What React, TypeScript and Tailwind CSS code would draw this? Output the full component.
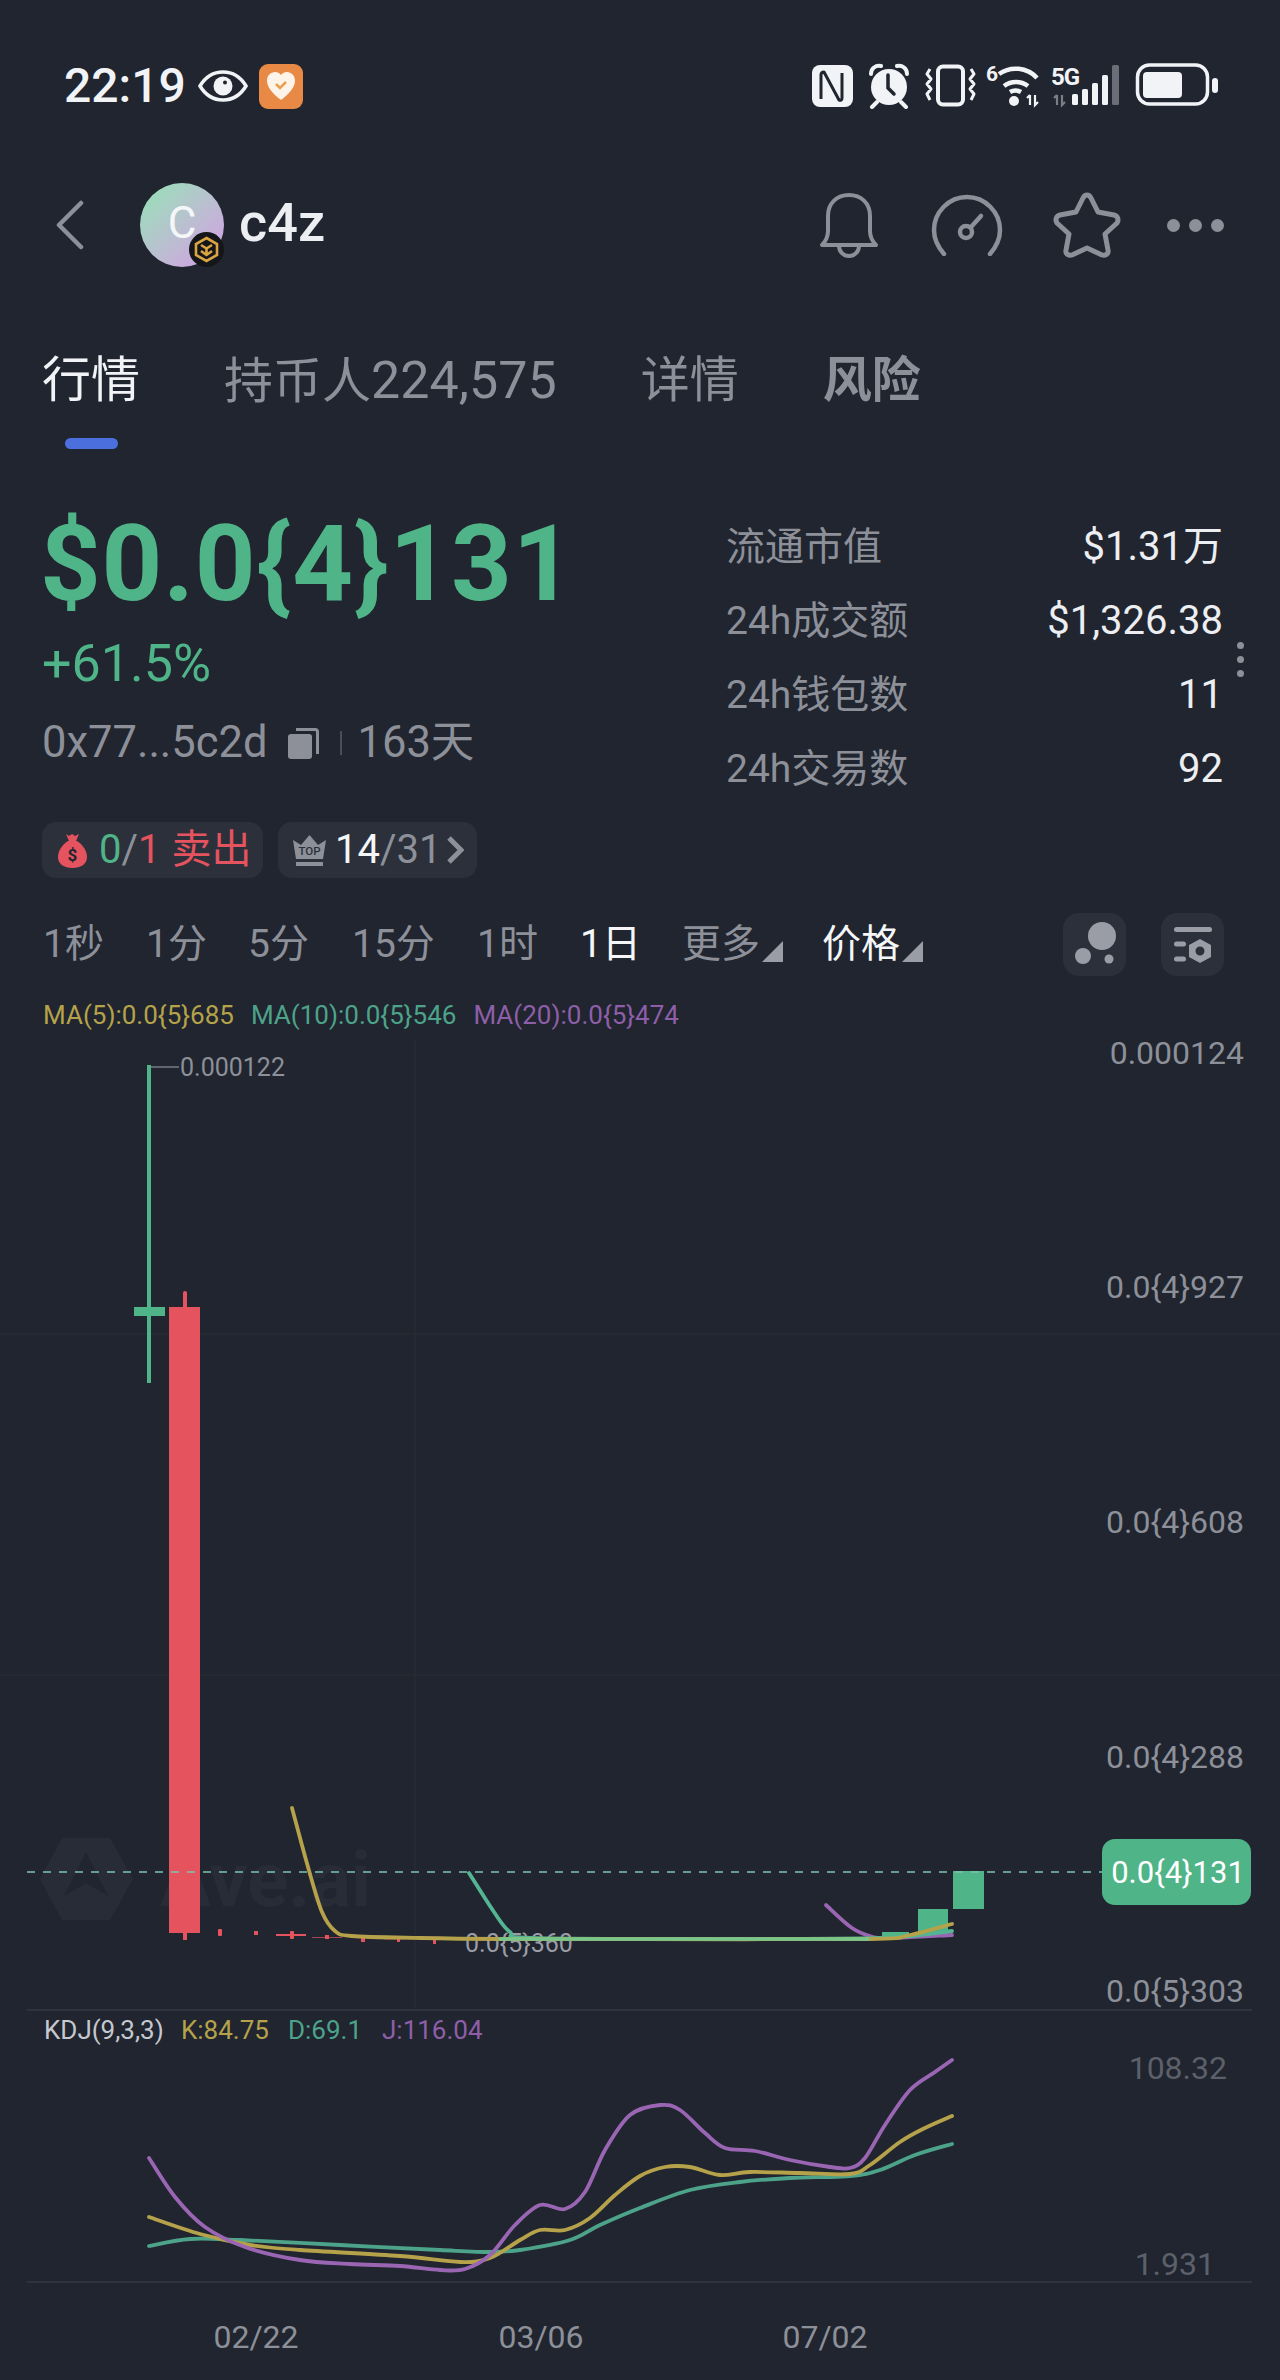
import { useMemo } from 'react';

const GREEN = '#4fb488';
const RED = '#e5535f';
const GRAY = '#8d9099';
const YELLOW = '#b5a24a';
const TEAL = '#4da38a';
const PURPLE = '#9a66b4';

type Pt = [number, number];

// Catmull-Rom -> bezier, para suavizar las curvas del gráfico
function smooth(pts: Pt[]) {
  let d = `M${pts[0][0]} ${pts[0][1]}`;
  for (let i = 0; i < pts.length - 1; i++) {
    const p0 = pts[i - 1] ?? pts[i];
    const p1 = pts[i];
    const p2 = pts[i + 1];
    const p3 = pts[i + 2] ?? p2;
    const c1x = p1[0] + (p2[0] - p0[0]) / 6;
    const c1y = p1[1] + (p2[1] - p0[1]) / 6;
    const c2x = p2[0] - (p3[0] - p1[0]) / 6;
    const c2y = p2[1] - (p3[1] - p1[1]) / 6;
    d += ` C${c1x.toFixed(1)} ${c1y.toFixed(1)} ${c2x.toFixed(1)} ${c2y.toFixed(1)} ${p2[0]} ${p2[1]}`;
  }
  return d;
}

const kdjJ: Pt[] = [[149, 2158], [175, 2197], [205, 2227], [245, 2247], [300, 2260], [350, 2264], [400, 2266], [440, 2270], [465, 2269], [490, 2255], [515, 2225], [540, 2205], [565, 2209], [585, 2192], [605, 2150], [630, 2115], [660, 2105], [680, 2110], [705, 2133], [725, 2148], [755, 2151], [790, 2160], [830, 2167], [850, 2168], [865, 2158], [885, 2125], [910, 2090], [935, 2072], [952, 2060]];
const kdjK: Pt[] = [[149, 2217], [200, 2234], [250, 2245], [300, 2250], [400, 2256], [460, 2262], [490, 2258], [520, 2240], [540, 2230], [565, 2230], [590, 2218], [615, 2195], [640, 2176], [665, 2167], [690, 2167], [720, 2175], [750, 2172], [800, 2173], [850, 2174], [870, 2165], [900, 2142], [925, 2128], [952, 2116]];
const kdjD: Pt[] = [[149, 2246], [190, 2239], [240, 2240], [340, 2245], [440, 2250], [490, 2252], [520, 2250], [570, 2240], [600, 2225], [640, 2208], [690, 2190], [740, 2182], [790, 2178], [850, 2176], [880, 2170], [915, 2155], [952, 2144]];
const ma5: Pt[] = [[292, 1808], [308, 1867], [322, 1912], [335, 1931], [352, 1936], [420, 1938], [500, 1939], [640, 1939], [868, 1939], [910, 1935], [952, 1924]];
const ma10: Pt[] = [[469, 1873], [494, 1912], [510, 1932], [530, 1938], [700, 1939], [880, 1938], [952, 1931]];
const ma20: Pt[] = [[826, 1905], [852, 1928], [873, 1937], [890, 1938], [952, 1935]];

function StatusIcons() {
  return (
    <svg width="408" height="46" viewBox="813 64 408 46" fill="none">
      {/* NFC */}
      <rect x="813" y="66" width="41" height="42" rx="8" fill="#f1f3f6" />
      <path d="M822 100V76q0-3 3-3l15 28q3 1 3-2V74" stroke="#20252f" strokeWidth="3" strokeLinejoin="round" />
      {/* Alarma */}
      <circle cx="890" cy="88" r="18" fill="#f1f3f6" />
      <path d="M872 75a8 8 0 0 1 10-8M908 75a8 8 0 0 0-10-8M878 103l-5 5M902 103l5 5" stroke="#f1f3f6" strokeWidth="4" strokeLinecap="round" />
      <path d="M889 76v13l6 6" stroke="#20252f" strokeWidth="3.500" strokeLinecap="round" />
      {/* Vibración */}
      <rect x="939" y="67.500" width="25" height="38" rx="5" stroke="#f1f3f6" strokeWidth="4" />
      <path d="M931 70l-3 5 4 5-4 5 4 5-4 5 3 6M972 70l3 5-4 5 4 5-4 5 4 5-3 6" stroke="#f1f3f6" strokeWidth="3" strokeLinejoin="round" />
      {/* Wifi 6 */}
      <text x="987" y="82" fill="#f1f3f6" fontSize="21" fontWeight="700">6</text>
      <path d="M1000 75a29 29 0 0 1 38 4M1005 87a20 20 0 0 1 24 0M1011 93a11 11 0 0 1 11 0" stroke="#f1f3f6" strokeWidth="4.500" />
      <circle cx="1015" cy="102" r="5" fill="#f1f3f6" />
      <path d="M1031 96v10M1028 99l3-3M1036 96v10l3-3" stroke="#f1f3f6" strokeWidth="2.200" />
      {/* 5G y cobertura */}
      <text x="1052" y="86" fill="#f1f3f6" fontSize="24" fontWeight="700" letterSpacing="-1">5G</text>
      <path d="M1058 96v10M1055 99l3-3M1063 96v10l3-3" stroke="#7b7e86" strokeWidth="2.200" />
      <rect x="1073" y="95" width="6" height="11" rx="1.500" fill="#f1f3f6" />
      <rect x="1083" y="90" width="6" height="16" rx="1.500" fill="#f1f3f6" />
      <rect x="1093" y="84" width="6" height="22" rx="1.500" fill="#f1f3f6" />
      <rect x="1103" y="76" width="6" height="30" rx="1.500" fill="#f1f3f6" />
      <rect x="1113" y="66" width="7" height="40" rx="1.500" fill="#6b6e76" />
      {/* Batería */}
      <rect x="1138.500" y="66" width="70" height="39" rx="12" stroke="#f1f3f6" strokeWidth="3.500" />
      <rect x="1144" y="73" width="39" height="26" rx="4" fill="#f1f3f6" />
      <rect x="1213" y="79" width="6" height="15" rx="3" fill="#f1f3f6" />
    </svg>
  );
}

function StatusBar() {
  return (
    <div className="h-[172px] flex items-center justify-between pl-[64px] pr-[60px] shrink-0">
      <div className="flex items-center">
        <span className="text-[48px] font-medium leading-none text-[#f1f3f6]">22:19</span>
        <svg width="50" height="32" viewBox="0 0 50 32" fill="none" className="ml-[12px]">
          <path d="M2 16C8 6 16 2 25 2s17 4 23 14c-6 10-14 14-23 14S8 26 2 16Z" stroke="#f1f3f6" strokeWidth="3.500" />
          <circle cx="25" cy="16" r="9.500" fill="#f1f3f6" />
          <circle cx="27" cy="12.500" r="2" fill="#20252f" />
        </svg>
        <div className="ml-[11px] w-[44px] h-[45px] rounded-[9px] bg-[#e88a45] flex items-center justify-center">
          <svg width="30" height="30" viewBox="0 0 30 30">
            <path d="M15 29C6 22 1 16 1 9.500 1 4.500 5 1 9 1c2.500 0 4.500 1 6 3 1.500-2 3.500-3 6-3 4 0 8 3.500 8 8.500C29 16 24 22 15 29Z" fill="#fdf3e8" />
            <path d="M10 13l4 4 6-6" stroke="#e8a04f" strokeWidth="2.500" fill="none" />
          </svg>
        </div>
      </div>
      <StatusIcons />
    </div>
  );
}

function Header() {
  return (
    <div className="h-[106px] flex items-center pl-[56px] pr-[56px] shrink-0">
      <svg width="28" height="50" viewBox="0 0 28 50" fill="none">
        <path d="M25 3 3 25l22 22" stroke={GRAY} strokeWidth="4.500" strokeLinecap="round" strokeLinejoin="round" />
      </svg>
      <div className="relative ml-[56px] w-[84px] h-[84px] rounded-full bg-linear-to-br from-[#8fe3b4] to-[#d49ae6] flex items-center justify-center">
        <span className="text-[#f4f6f8] text-[44px] leading-none pb-[4px]">C</span>
        <div className="absolute right-0 bottom-0 w-[35px] h-[35px] rounded-full bg-[#15161a] flex items-center justify-center">
          <svg width="27" height="27" viewBox="0 0 27 27" fill="none" stroke="#d9a441" strokeWidth="2.600">
            <path d="M13.500 2 24 8v11l-10.500 6L3 19V8Z" />
            <path d="M8 9l5.500 3.500L19 9M13.500 12.500V18M8 15l5.500 4 5.500-4" />
          </svg>
        </div>
      </div>
      <span className="ml-[15px] text-[54px] font-medium leading-none text-[#eceef2] pb-[4px]">c4z</span>

      <div className="ml-auto flex items-center">
        <svg width="64" height="66" viewBox="0 0 64 66" fill="none" stroke={GRAY} strokeWidth="4" strokeLinejoin="round">
          <path d="M5 53c4-4 6-8 6-14V24C11 11 20 3 32 3s21 8 21 21v15c0 6 2 10 6 14Z" />
          <path d="M22 54a10 10 0 0 0 20 0" />
        </svg>
        <svg width="72" height="62" viewBox="0 0 72 62" fill="none" stroke={GRAY} strokeWidth="4.500" strokeLinecap="round" className="ml-[50px]">
          <path d="M13 60C6 52 3 44 3 36 3 18 18 3 36 3s33 15 33 33c0 8-3 16-10 24" />
          <circle cx="35" cy="38" r="6" />
          <path d="M40 33l10-11" />
        </svg>
        <svg width="68" height="66" viewBox="0 0 68 66" fill="none" stroke={GRAY} strokeWidth="5" strokeLinejoin="round" className="ml-[50px]">
          <path d="M34 3c2 0 3 1 4 3l7 14 16 3c4 1 5 5 3 8L52 42l3 16c1 4-3 6-6 5l-15-7-15 7c-3 1-7-1-6-5l3-16L4 31c-2-3-1-7 3-8l16-3 7-14c1-2 2-3 4-3Z" />
        </svg>
        <div className="ml-[46px] flex gap-[9px]">
          <span className="w-[13px] h-[13px] rounded-full bg-[#8d9099]" />
          <span className="w-[13px] h-[13px] rounded-full bg-[#8d9099]" />
          <span className="w-[13px] h-[13px] rounded-full bg-[#8d9099]" />
        </div>
      </div>
    </div>
  );
}

function Tabs() {
  return (
    <div className="h-[179px] pl-[42px] pt-[73px] flex gap-[84px] shrink-0 text-[49px] leading-[60px] text-[#8d9099]">
      <div className="flex flex-col items-center">
        <span className="text-[#f1f3f6]">行情</span>
        <span className="mt-[27px] w-[53px] h-[11px] rounded-full bg-[#4b70de]" />
      </div>
      <span>持币人<span className="text-[52px]">224,575</span></span>
      <span>详情</span>
      <span className="font-bold">风险</span>
    </div>
  );
}

const stats = [
  ['流通市值', '$1.31万'],
  ['24h成交额', '$1,326.38'],
  ['24h钱包数', '11'],
  ['24h交易数', '92'],
];

function Summary() {
  return (
    <div className="relative h-[365px] pl-[42px] pr-[57px] flex justify-between shrink-0">
      <div className="flex flex-col">
        <span className="mt-[55px] -ml-[2px] text-[106px] font-bold leading-[104px] tracking-[0.8px] text-[#4fb488]">$0.0{'{4}'}131</span>
        <span className="mt-[18px] text-[52px] leading-[60px] text-[#4fb488]">+61.5%</span>
        <div className="mt-[21px] flex items-center text-[43.500px] leading-[56px] text-[#8d9099]">
          <span>0x77...5c2d</span>
          <svg width="32" height="32" viewBox="0 0 32 32" className="ml-[20px]" fill="#8d9099">
            <rect x="0" y="7" width="24" height="25" rx="3" />
            <path d="M8 1h19a4 4 0 0 1 4 4v22h-3V5a1 1 0 0 0-1-1H8Z" />
          </svg>
          <span className="ml-[20px] w-[2px] h-[24px] bg-[#4a4e58]" />
          <span className="ml-[16px]">163天</span>
        </div>
      </div>
      <div className="w-[497px] pt-[53px] flex flex-col text-[39px] leading-[74px]">
        {stats.map(([label, value]) => (
          <div key={label} className="flex justify-between">
            <span className="text-[#8d9099]">{label}</span>
            <span className="text-[#eceef2] text-[40px]">{value}</span>
          </div>
        ))}
      </div>
      <div className="absolute right-[36px] top-[185px] flex flex-col gap-[7px]">
        <span className="w-[7px] h-[7px] rounded-full bg-[#8d9099]" />
        <span className="w-[7px] h-[7px] rounded-full bg-[#8d9099]" />
        <span className="w-[7px] h-[7px] rounded-full bg-[#8d9099]" />
      </div>
    </div>
  );
}

function Pills() {
  return (
    <div className="pl-[42px] flex gap-[15px] shrink-0 text-[40px] leading-none">
      <div className="w-[221px] h-[56px] rounded-[14px] bg-[#2b303b] flex items-center pl-[16px]">
        <svg width="29" height="35" viewBox="0 0 29 35">
          <path d="M8 1l3 2 3-2 3 2 4-2-3 7h-7Z" fill={RED} />
          <path d="M10 8h9c6 4 10 10 10 16 0 7-6 11-14.500 11S0 31 0 24C0 18 4 12 10 8Z" fill={RED} />
          <text x="14.500" y="28" textAnchor="middle" fontSize="17" fontWeight="700" fill="#20252f">$</text>
        </svg>
        <span className="ml-[12px] text-[#4fb488]">0</span>
        <span className="text-[#8d9099]">/</span>
        <span className="text-[#e5535f]">1</span>
        <span className="ml-[11px] text-[#e5535f] text-[40px]">卖出</span>
      </div>
      <div className="w-[199px] h-[56px] rounded-[14px] bg-[#2b303b] flex items-center pl-[15px]">
        <svg width="33" height="32" viewBox="0 0 33 32">
          <path d="M0 6l8 5 8.500-10L25 11l8-5-3 19H3Z" fill="#8d9099" />
          <rect x="3" y="28" width="27" height="4" fill="#8d9099" />
          <text x="16.500" y="21" textAnchor="middle" fontSize="11.500" fontWeight="500" fill="#2b303b">TOP</text>
        </svg>
        <span className="ml-[9px] text-[#f4f6f8]">14</span>
        <span className="text-[#8d9099]">/31</span>
        <svg width="18" height="30" viewBox="0 0 18 30" fill="none" className="ml-[5px]">
          <path d="M3 3l12 12L3 27" stroke="#8d9099" strokeWidth="5" />
        </svg>
      </div>
    </div>
  );
}

function Corner() {
  return (
    <svg width="21" height="21" viewBox="0 0 21 21" className="ml-[2px] mt-[14px]">
      <path d="M21 0v21H0Z" fill="#9a9da6" />
    </svg>
  );
}

function Toolbar() {
  return (
    <div className="h-[63px] mt-[35px] pl-[43px] pr-[56px] flex items-center shrink-0 text-[39px] leading-none text-[#8d9099]">
      <span className="w-[103px]">1秒</span>
      <span className="w-[102px]">1分</span>
      <span className="w-[104px]">5分</span>
      <span className="w-[125px]">15分</span>
      <span className="w-[103px]">1时</span>
      <span className="w-[102px] text-[#f4f6f8]">1日</span>
      <span>更多</span>
      <Corner />
      <span className="ml-[39px] text-[#f4f6f8]">价格</span>
      <Corner />
      <div className="ml-auto flex gap-[35px]">
        <div className="w-[63px] h-[63px] rounded-[16px] bg-[#2b303b]">
          <svg width="63" height="63" viewBox="0 0 63 63" fill="#9a9da6">
            <circle cx="39" cy="23" r="14" />
            <circle cx="20" cy="43" r="8" />
            <circle cx="46" cy="46" r="4.500" />
          </svg>
        </div>
        <div className="w-[63px] h-[63px] rounded-[16px] bg-[#2b303b]">
          <svg width="63" height="63" viewBox="0 0 63 63" fill="#9a9da6">
            <rect x="13" y="14" width="38" height="5" rx="2.500" />
            <rect x="13" y="28.500" width="12" height="5" rx="2.500" />
            <rect x="13" y="43.500" width="12" height="5" rx="2.500" />
            <path fillRule="evenodd" d="M39 26l11 6v12l-11 6-11-6V32Zm0 7.500a4.500 4.500 0 1 0 0 9 4.500 4.500 0 0 0 0-9Z" />
          </svg>
        </div>
      </div>
    </div>
  );
}

function Legend() {
  return (
    <div className="h-[38px] mt-[26px] pl-[43px] flex gap-[17px] shrink-0 text-[26px] leading-[26px]">
      <span className="text-[#b5a24a]">MA(5):0.0{'{5}'}685</span>
      <span className="text-[#4da38a]">MA(10):0.0{'{5}'}546</span>
      <span className="text-[#8e5fa8]">MA(20):0.0{'{5}'}474</span>
    </div>
  );
}

function Chart() {
  const paths = useMemo(
    () => ({
      j: smooth(kdjJ),
      k: smooth(kdjK),
      d: smooth(kdjD),
      ma5: smooth(ma5),
      ma10: smooth(ma10),
      ma20: smooth(ma20),
    }),
    []
  );

  const axis: [string, number][] = [
    ['0.000124', 1053],
    ['0.0{4}927', 1287],
    ['0.0{4}608', 1522],
    ['0.0{4}288', 1757],
    ['0.0{5}303', 1991],
  ];

  return (
    <svg width="1280" height="1340" viewBox="0 1040 1280 1340" className="block shrink-0" fontFamily="Roboto, 'Noto Sans CJK SC', sans-serif">
      {/* rejilla */}
      <path d="M0 1334H1280M0 1675H1280M415 1040V2010" stroke="#262b35" strokeWidth="1.500" />
      <path d="M27 2010H1252M27 2282H1252" stroke="#333843" strokeWidth="1.500" />

      {/* marca de agua */}
      <path d="M62 1838h48l23 41-23 41H62l-22-41Z" fill="#272c37" />
      <path d="M86 1852l22 44-22-13-22 13Z" fill="#20252f" />
      <text x="160" y="1906" fontSize="76" fontWeight="700" fill="#272c37">Ave.ai</text>

      {/* velas */}
      <rect x="147" y="1065" width="4" height="318" fill={GREEN} />
      <rect x="134" y="1307" width="31" height="9" fill={GREEN} />
      <path d="M151 1067H179" stroke="#777b84" strokeWidth="1.500" />
      <text x="180" y="1076" fontSize="25" fill={GRAY}>0.000122</text>
      <rect x="183" y="1291" width="4" height="18" rx="2" fill={RED} />
      <rect x="169" y="1307" width="31" height="626" fill={RED} />
      <rect x="183" y="1933" width="4" height="7" fill={RED} />
      <rect x="218" y="1929" width="4" height="7" rx="1" fill={RED} />
      <rect x="254" y="1931" width="4" height="4" fill={RED} />
      <rect x="276" y="1934" width="30" height="2" fill={RED} />
      <rect x="290" y="1931" width="4" height="8" rx="1" fill={RED} />
      <rect x="312" y="1937" width="30" height="1" fill="#a5444f" />
      <rect x="325" y="1935" width="4" height="4" fill={RED} />
      <rect x="361" y="1937" width="4" height="5" fill={RED} />
      <rect x="384" y="1938" width="30" height="1.500" fill="#a5444f" />
      <rect x="397" y="1937" width="3" height="5" fill={RED} />
      <rect x="433" y="1939" width="3" height="5" fill={RED} />
      <rect x="882" y="1932" width="27" height="6" fill={GREEN} />
      <rect x="918" y="1909" width="30" height="26" fill={GREEN} />
      <rect x="953" y="1871" width="31" height="38" fill={GREEN} />

      {/* línea de precio */}
      <path d="M27 1872H1102" stroke="#7cc4b0" strokeWidth="1.500" strokeDasharray="8 8" />

      <text x="465" y="1952" fontSize="25" fill="#9a9da6">0.0{'{5}'}360</text>

      {/* medias móviles */}
      <g fill="none" strokeWidth="3.800" strokeLinecap="round">
        <path d={paths.ma20} stroke={PURPLE} />
        <path d={paths.ma10} stroke="#54b592" />
        <path d={paths.ma5} stroke={YELLOW} />
        <path d="M500 1939H868" stroke="#77c68c" strokeWidth="3.500" />
      </g>

      {/* eje de precios */}
      {axis.map(([t, y]) => (
        <text key={t} x="1244" y={y + 11} textAnchor="end" fontSize="32" fill={GRAY}>
          {t}
        </text>
      ))}
      <rect x="1102" y="1839" width="149" height="66" rx="13" fill={GREEN} />
      <text x="1178" y="1883" textAnchor="middle" fontSize="31" fill="#fff">0.0{'{4}'}131</text>

      {/* KDJ */}
      <text y="2039" fontSize="26">
        <tspan x="44" fill="#c5c8ce">KDJ(9,3,3)</tspan>
        <tspan x="181" fill={YELLOW}>K:84.75</tspan>
        <tspan x="288" fill={TEAL}>D:69.1</tspan>
        <tspan x="382" fill="#8e5fa8">J:116.04</tspan>
      </text>
      <g fill="none" strokeWidth="3.800" strokeLinecap="round">
        <path d={paths.d} stroke={TEAL} />
        <path d={paths.k} stroke={YELLOW} />
        <path d={paths.j} stroke={PURPLE} />
      </g>
      <text x="1227" y="2079" textAnchor="end" fontSize="32" fill="#5c606a">108.32</text>
      <text x="1215" y="2275" textAnchor="end" fontSize="32" fill="#5c606a">1.931</text>

      {/* eje de fechas */}
      <g fontSize="32" fill={GRAY} textAnchor="middle">
        <text x="256" y="2348">02/22</text>
        <text x="541" y="2348">03/06</text>
        <text x="825" y="2348">07/02</text>
      </g>
    </svg>
  );
}

export default function App() {
  return (
    <div className="w-[1280px] h-[2380px] overflow-hidden bg-[#20252f] flex flex-col font-[Roboto,'Noto_Sans_CJK_SC',sans-serif]">
      <StatusBar />
      <Header />
      <Tabs />
      <Summary />
      <Pills />
      <Toolbar />
      <Legend />
      <Chart />
    </div>
  );
}
